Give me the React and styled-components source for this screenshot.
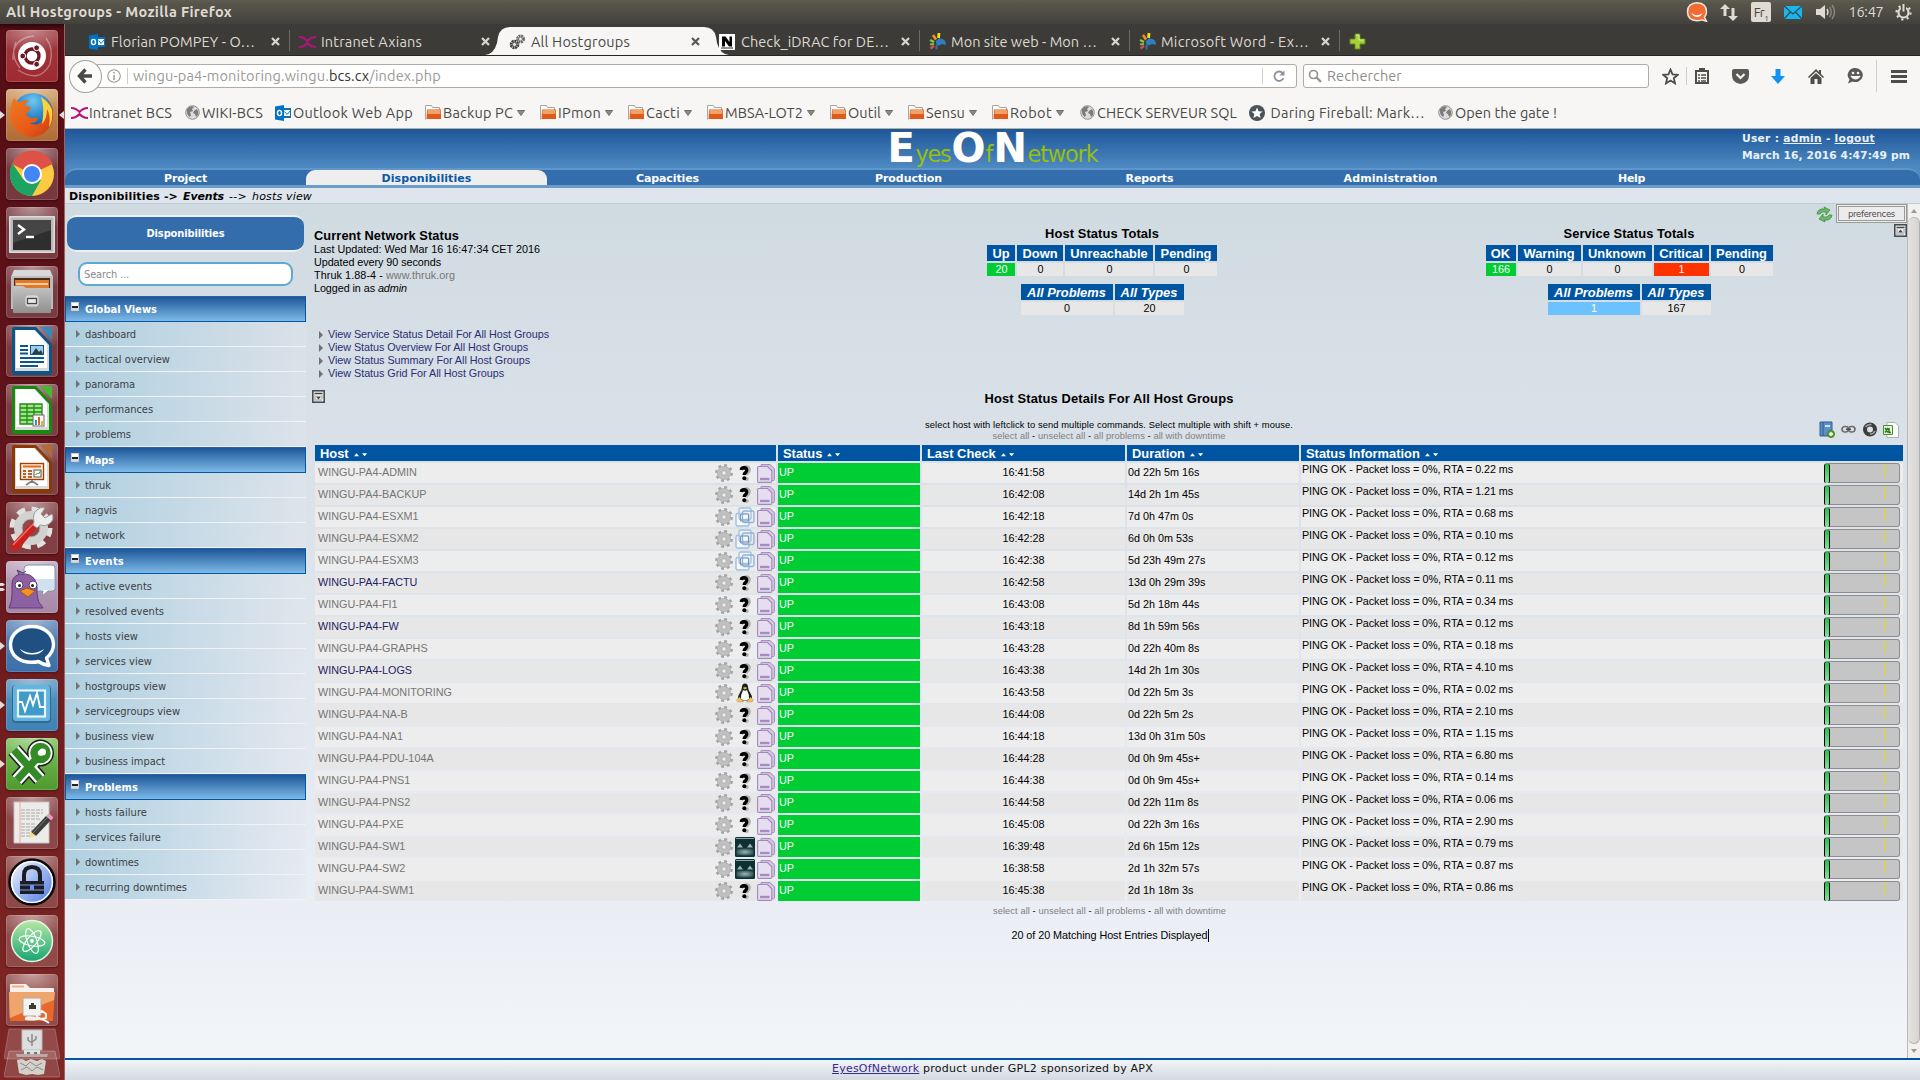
import React, { useLayoutEffect, useRef, useState } from "react";
import styled, { createGlobalStyle, css } from "styled-components";

const UI = `"Ubuntu", "Open Sans", "Noto Sans", sans-serif`;
const ARIAL = `"Liberation Sans", Arial, sans-serif`;
const VERDANA = `"DejaVu Sans", Verdana, sans-serif`;
const CONDENSED = `"DejaVu Sans Condensed", "DejaVu Sans", Tahoma, sans-serif`;

const Global = createGlobalStyle`
  *, *::before, *::after { box-sizing: border-box; }
  html, body { margin: 0; padding: 0; }
  body { width: 1920px; height: 1080px; overflow: hidden; font-family: ${ARIAL}; }
  svg { display: block; flex: none; }
`;

/* ---------- text that keeps a given advance width ---------- */
const FitSpan = styled.span`
  display: inline-block;
  white-space: pre;
  flex: none;
`;
function Fit({ w, children }) {
  const ref = useRef(null);
  const [ls, setLs] = useState(0);
  useLayoutEffect(() => {
    const el = ref.current;
    el.style.letterSpacing = "0px";
    const natural = el.getBoundingClientRect().width;
    const n = el.textContent.length;
    setLs((w - natural) / n);
    el.style.letterSpacing = `${(w - natural) / n}px`;
  }, [w]);
  return (
    <FitSpan ref={ref} style={{ letterSpacing: `${ls}px` }}>
      {children}
    </FitSpan>
  );
}

/* ---------- desktop ---------- */
const Desktop = styled.div`
  width: 1920px;
  height: 1080px;
  display: flex;
  flex-direction: column;
  overflow: hidden;
  background: #eef1f6;
`;
const TopPanel = styled.header`
  height: 24px;
  flex: none;
  display: flex;
  align-items: center;
  justify-content: space-between;
  padding: 0 4px 0 6px;
  background: linear-gradient(#5f5c50 0, #57554b 4px, #43413c 100%);
  color: #dfdbd2;
  font: 14.5px/24px ${UI};
`;
const WindowTitle = styled.div`
  font-weight: 700;
`;
const Tray = styled.div`
  display: flex;
  align-items: center;
  height: 24px;
`;
const TrayItem = styled.div`
  width: ${(p) => p.$w}px;
  display: flex;
  justify-content: center;
  align-items: center;
`;
const KeyboardBadge = styled.div`
  width: 20px;
  height: 20px;
  border-radius: 2px;
  background: #dfdbd2;
  color: #45433d;
  font: 13px/20px ${UI};
  letter-spacing: -0.5px;
  text-align: center;
  sub {
    font-size: 8px;
    line-height: 0;
  }
`;
const Workspace = styled.div`
  flex: 1;
  display: flex;
  min-height: 0;
`;

/* ---------- launcher ---------- */
const LauncherBar = styled.nav`
  width: 65px;
  flex: none;
  padding: 6px 0 0;
  display: flex;
  flex-direction: column;
  gap: 7px;
  overflow: hidden;
  border-right: 1px solid #a0605c;
  background: linear-gradient(#2c070b 0, #560d14 6px, #5f131a 35%, #6f1c1f 60%, #7e2725 100%);
`;
const LauncherSlot = styled.div`
  height: 52px;
  flex: none;
  display: flex;
  align-items: center;
`;
const Pip = styled.div`
  width: 6px;
  display: flex;
  align-items: center;
`;
const Tile = styled.div`
  width: 52px;
  height: 52px;
  border-radius: 4px;
  background: ${(p) =>
    p.$bg
      ? `radial-gradient(ellipse 80% 45% at 50% 0, rgba(255,255,255,.4), rgba(255,255,255,0)), ${p.$bg}`
      : "radial-gradient(ellipse 75% 50% at 50% 0, rgba(255,255,255,.5), rgba(255,255,255,.05)), rgba(255,255,255,.13)"};
  box-shadow: inset 0 0 0 1px rgba(255, 255, 255, 0.16), 0 1px 2px rgba(0, 0, 0, 0.35);
`;
const FoldedTiles = styled.div`
  margin-top: -5px;
  padding-left: 4px;
`;

const LibreDoc = ({ dark, mid, children }) => (
  <svg width="52" height="52" viewBox="0 0 52 52">
    <path d="M8 2h22l16 17v28q0 3-3 3H9q-3 0-3-3V4q0-2 2-2z" fill={dark} />
    <path d="M34 2h12v13z" fill={mid} />
    <path d="M9 5h20l14 15v26H9z" fill="#d9d9d9" />
    <path d="M10 5h18l13 14v24H10z" fill="#fff" />
    {children}
  </svg>
);

const launcherItems = [
  {
    id: "dash",
    bg: "linear-gradient(#9c3a40,#a02a32)",
    icon: (
      <svg width="52" height="52" viewBox="0 0 52 52">
        <path d="M7 30Q6 8 28 6M12 40Q34 54 44 34M40 8q8 10 4 26M10 12Q4 26 14 38" stroke="#fff" strokeOpacity=".35" strokeWidth="1.4" fill="none" />
        <circle cx="26" cy="26" r="14" fill="#fff" />
        <circle cx="26" cy="26" r="7" fill="none" stroke="#6c1a24" strokeWidth="3.4" />
        <g fill="#6c1a24" stroke="#fff" strokeWidth="1">
          <circle cx="16.7" cy="26" r="2.9" />
          <circle cx="30.6" cy="17.8" r="2.9" />
          <circle cx="30.6" cy="34.2" r="2.9" />
        </g>
      </svg>
    ),
  },
  {
    id: "firefox",
    bg: "linear-gradient(#cf9a66,#b06a35)",
    left: "arrow",
    right: true,
    icon: (
      <svg width="52" height="52" viewBox="0 0 52 52">
        <defs>
          <radialGradient id="ffb" cx=".5" cy=".2" r=".8"><stop offset="0" stopColor="#6fc8f0" /><stop offset=".6" stopColor="#1f7ac0" /><stop offset="1" stopColor="#123f7c" /></radialGradient>
          <linearGradient id="ffo" x1="0" y1="0" x2="1" y2="1"><stop offset="0" stopColor="#ee7a1f" /><stop offset=".6" stopColor="#e85a18" /><stop offset="1" stopColor="#c93713" /></linearGradient>
        </defs>
        <circle cx="27" cy="24" r="20" fill="url(#ffb)" />
        <path d="M5 17q1-4 3-8 2 3 6 4 5-3 9-1-4 2-4 5 3 0 6 1-1 4-5 6 1 5 7 5 4-1 5 1-2 4-8 4 5 3 10 0 6-4 7-11 1-9-4-13 8 3 10 13 1 14-9 21-11 7-22 1Q3 38 4 25q0-4 1-8z" fill="url(#ffo)" />
        <path d="M35 8q8 5 11 13 1 11-3 17 2-12-2-18 0 10-5 15 3-16-1-27z" fill="#fbd33c" />
      </svg>
    ),
  },
  {
    id: "chrome",
    icon: (
      <svg width="52" height="52" viewBox="0 0 52 52">
        <circle cx="26" cy="26" r="22" fill="#fccb41" />
        <path d="M26 26 6 16A22 22 0 0 1 46.5 16z" fill="#dd5147" />
        <path d="M26 4a22 22 0 0 1 20.5 12H26z" fill="#dd5147" />
        <path d="M6.5 15.500A22 22 0 0 0 26 48l9-16-18-1z" fill="#1da362" />
        <circle cx="26" cy="26" r="10" fill="#fff" />
        <circle cx="26" cy="26" r="8" fill="#4285f4" />
      </svg>
    ),
  },
  {
    id: "terminal",
    icon: (
      <svg width="52" height="52" viewBox="0 0 52 52">
        <rect x="3" y="9" width="46" height="37" rx="1" fill="#dcdcdc" />
        <rect x="4.500" y="10.500" width="43" height="34" fill="#b9b9b9" />
        <rect x="7" y="13" width="38" height="30" fill="#2e2e2e" />
        <path d="M7 13h38v10L7 36z" fill="#454545" />
        <path d="m12 18 6 4.500-6 4.500" stroke="#fff" strokeWidth="2.400" fill="none" />
        <path d="M20 30h8" stroke="#fff" strokeWidth="2.400" />
      </svg>
    ),
  },
  {
    id: "files",
    icon: (
      <svg width="52" height="52" viewBox="0 0 52 52">
        <defs><linearGradient id="cab" x1="0" y1="0" x2="0" y2="1"><stop offset="0" stopColor="#c4c4c4" /><stop offset="1" stopColor="#8f8f8f" /></linearGradient></defs>
        <path d="M8 4h36l3 7v32H5V11z" fill="#d9d9d9" />
        <path d="M5 10h42v33H5z" fill="#bdbdbd" />
        <path d="M8 12h36v11H8z" fill="#4a2c18" />
        <path d="M9 14h34v8H9z" fill="#e0792c" />
        <path d="M10 17h32v2H10z" fill="#f8cf9c" />
        <path d="M7 20h10l3 2h25v24q0 1-1 1H8q-1 0-1-1z" fill="url(#cab)" />
        <rect x="20" y="30" width="12" height="10" rx="2" fill="#c9c9c9" stroke="#e2e2e2" />
        <rect x="21.500" y="32.500" width="9" height="5" fill="#e8e8e8" stroke="#444" strokeWidth="1.200" />
      </svg>
    ),
  },
  {
    id: "writer",
    icon: (
      <LibreDoc dark="#0c5687" mid="#3a87b8">
        <path d="M14 21h8M14 25h8M14 28.500h8M14 33h24M14 37h24M14 41h18" stroke="#0b5788" strokeWidth="2" />
        <rect x="24.500" y="20.500" width="13" height="9" fill="#9fcdf0" stroke="#0b5788" />
        <path d="m26 29 4-6 3 4 2-2 2 4z" fill="#2c3d3d" />
      </LibreDoc>
    ),
  },
  {
    id: "calc",
    icon: (
      <LibreDoc dark="#168a0c" mid="#49b535">
        <rect x="14" y="20" width="22" height="20" fill="#a3e687" />
        <path d="M14 20h22v20H14zM14 24h22M14 28h22M14 32h22M14 36h22M21 20v20M28 20v20" stroke="#1f8a17" strokeWidth="1.300" fill="none" />
        <rect x="27" y="31" width="11" height="11" fill="#fff" stroke="#666" />
        <path d="M29 36h2v5h-2z" fill="#1b9ae0" /><path d="M32 33h2v8h-2z" fill="#e0601b" /><path d="M35 37h2v4h-2z" fill="#e8b51b" />
      </LibreDoc>
    ),
  },
  {
    id: "impress",
    icon: (
      <LibreDoc dark="#8a3a06" mid="#b06a34">
        <rect x="14.500" y="20.500" width="23" height="16" fill="#fdeee2" stroke="#a33e03" strokeWidth="1.400" />
        <path d="M17 23.500h18" stroke="#dd6a1b" strokeWidth="2" />
        <path d="M17 28h3M17 31h3M17 34h3M22 28h4M22 31h4M22 34h4" stroke="#8a3a06" strokeWidth="1.600" />
        <rect x="28" y="27" width="7" height="7" fill="#fff" stroke="#555" />
        <path d="m29.500 32 2-2 1 1 2-3" stroke="#2b9a22" fill="none" />
        <path d="m20 42 6-4 6 4M26 37v2" stroke="#7d7d7d" strokeWidth="1.600" fill="none" />
      </LibreDoc>
    ),
  },
  {
    id: "settings",
    icon: (
      <svg width="52" height="52" viewBox="0 0 52 52">
        <circle cx="25" cy="26" r="18" fill="none" stroke="#e0e0de" strokeWidth="7" strokeDasharray="8 6.137" />
        <circle cx="25" cy="26" r="13" fill="none" stroke="#d2d2d0" strokeWidth="8" />
        <circle cx="25" cy="26" r="9" fill="#8d4a4b" stroke="#b7b7b5" />
        <path d="M5 43 28 18l5 5L12 48q-5 2-7-1z" fill="#c9211e" />
        <path d="m7 43 22-23" stroke="#f0706a" strokeWidth="1.500" />
        <path d="M28 20q-2-8 3-12 4-4 8-2l-4 6 4 4 7-4q3 6-3 10-4 3-9 1l-3 3-4-3z" fill="#ececec" stroke="#9b9b9b" />
      </svg>
    ),
  },
  {
    id: "pidgin",
    bg: "linear-gradient(#bba3bd,#a788a6)",
    left: "double",
    icon: (
      <svg width="52" height="52" viewBox="0 0 52 52">
        <path d="M22 4h24q3 0 3 3v20q0 3-3 3h-4l-6 5 1-5H24q-6 0-6-6V8q0-4 4-4z" fill="#fff" stroke="#7b93ad" />
        <path d="M24 18h24v9q0 2-2 2H24z" fill="#cfe0ee" />
        <path d="M3 47q3-6 3-14V22q1-8 9-9 10-1 14 6 3 6 2 14 0 8 6 14z" fill="#8d5fa3" stroke="#5d3a75" />
        <path d="m13 13-2-4 6 3 3-2" stroke="#5d3a75" fill="#8d5fa3" />
        <circle cx="13" cy="24" r="4" fill="#fff" stroke="#5d3a75" /><circle cx="27" cy="24" r="4" fill="#fff" stroke="#5d3a75" />
        <circle cx="13.500" cy="24.500" r="1.500" fill="#222" /><circle cx="26.500" cy="24.500" r="1.500" fill="#222" />
        <path d="m14 30 7-3 8 3-7 6z" fill="#f6921e" stroke="#9c5304" strokeWidth=".8" />
      </svg>
    ),
  },
  {
    id: "hipchat",
    bg: "linear-gradient(#5f86b5,#3b6ea8)",
    left: "arrow",
    icon: (
      <svg width="52" height="52" viewBox="0 0 52 52">
        <path d="M26 6.500c12 0 21.500 7.500 21.500 18 0 6-3 10-7 13.500l2.500 7.500q-6-.8-10.500-4-3 .8-6.500.8C13 42.300 4.500 35 4.500 24.500S14 6.500 26 6.500z" fill="#205081" stroke="#fff" strokeWidth="3.400" strokeLinejoin="round" />
        <path d="M14 29q12 8 24 0-3 5.500-12 5.500T14 29z" fill="#fff" />
      </svg>
    ),
  },
  {
    id: "monitor",
    bg: "linear-gradient(#5c94bf,#3f82b4)",
    left: "arrow",
    icon: (
      <svg width="52" height="52" viewBox="0 0 52 52">
        <rect x="6" y="6" width="39" height="38" rx="4" fill="#2f6b94" />
        <rect x="7" y="6" width="37" height="36" rx="3" fill="#63b5dd" />
        <rect x="12" y="11.500" width="27" height="26" fill="#3f9bc9" stroke="#e6f4fb" strokeWidth="2.200" />
        <path d="M12 23h4l3 9 5-15 3 9 4-12 3 14h5" stroke="#fff" strokeWidth="1.900" fill="none" />
      </svg>
    ),
  },
  {
    id: "keepassx",
    bg: "linear-gradient(#7cc15c,#4f9a2f)",
    left: "arrow",
    icon: (
      <svg width="52" height="52" viewBox="0 0 52 52">
        <g stroke="#1d1d1d" strokeWidth="15" fill="none"><path d="m8 12 26 29" /><path d="M11 42 32 19" /><circle cx="34.500" cy="15" r="6" /></g>
        <g stroke="#fff" strokeWidth="12" fill="none"><path d="m8 12 26 29" /><path d="M11 42 32 19" /><circle cx="34.500" cy="15" r="6" /></g>
        <g stroke="#348a26" strokeWidth="7.500" fill="none"><path d="m8 12 26 29" /><path d="M11 42 32 19" /><circle cx="34.500" cy="15" r="6.500" /></g>
        <circle cx="36.500" cy="14" r="3.500" fill="#fff" />
      </svg>
    ),
  },
  {
    id: "gedit",
    icon: (
      <svg width="52" height="52" viewBox="0 0 52 52">
        <path d="M8 5h35v41H8z" fill="#ececea" stroke="#c2c2c2" />
        <path d="M14 5v41" stroke="#efa5a5" /><path d="M15 13h22M15 16h22M15 19h18M15 22h20M15 27h15M15 30h17M15 33h20M15 36h17M15 39h9" stroke="#a9a9a9" strokeDasharray="4 1" />
        <path d="m40 19 5 4-15 16-5-4z" fill="#3e3e3e" /><path d="m41.500 20.500-15 16" stroke="#777" /><path d="m25 35 5 4-7 2z" fill="#f3e27a" /><path d="m40 19 3-2.500 4.500 4-2.500 3z" fill="#e79ac2" />
      </svg>
    ),
  },
  {
    id: "keepass",
    icon: (
      <svg width="52" height="52" viewBox="0 0 52 52">
        <defs><linearGradient id="kp" x1="0" y1="0" x2="1" y2="1"><stop offset="0" stopColor="#fff" /><stop offset=".5" stopColor="#9db8f0" /><stop offset="1" stopColor="#4a6fe0" /></linearGradient></defs>
        <circle cx="26" cy="26" r="22.500" fill="url(#kp)" stroke="#0c0c0c" strokeWidth="2.600" />
        <circle cx="26" cy="26" r="20.400" fill="none" stroke="#fff" strokeWidth="1.400" />
        <path d="M18 26v-7q0-8 8-8t8 8v7" fill="none" stroke="#1c1c24" strokeWidth="4" />
        <path d="M14 25h24v13H14z" fill="#1c1c24" />
        <path d="M14 29h24M14 34h24" stroke="#7f9ae8" strokeWidth="1.200" /><path d="M24 29h4v5h-4z" fill="#6f8fe8" />
      </svg>
    ),
  },
  {
    id: "atom",
    icon: (
      <svg width="52" height="52" viewBox="0 0 52 52">
        <defs><linearGradient id="at" x1="0" y1="0" x2="0" y2="1"><stop offset="0" stopColor="#b7e8a4" /><stop offset="1" stopColor="#17a673" /></linearGradient></defs>
        <circle cx="26" cy="26" r="20.500" fill="url(#at)" stroke="#e6f6e8" strokeWidth="1.500" />
        <g fill="none" stroke="#fff" strokeWidth="1.200">
          <ellipse cx="26" cy="26" rx="13" ry="4.800" transform="rotate(10 26 26)" />
          <ellipse cx="26" cy="26" rx="13" ry="4.800" transform="rotate(70 26 26)" />
          <ellipse cx="26" cy="26" rx="13" ry="4.800" transform="rotate(130 26 26)" />
        </g>
        <circle cx="26" cy="26" r="1.900" fill="#fff" />
      </svg>
    ),
  },
  {
    id: "network-folder",
    icon: (
      <svg width="52" height="52" viewBox="0 0 52 52">
        <path d="M4 11q0-1 1-1h15l4 4h23q1 0 1 1v7H4z" fill="#f4f1ee" />
        <path d="M6 12.500h12" stroke="#f3a878" strokeWidth="1.800" />
        <path d="M3 18h46l-2 28q0 1-1 1H5q-1 0-1-1z" fill="#e8672a" /><path d="M3 18h46l-1 8L3.700 44z" fill="#efa66c" />
        <rect x="17" y="24" width="18" height="18" rx="1.500" fill="#f3f3f1" stroke="#b2a79e" />
        <path d="M23 35v-4h2v-2h3v2h2v4z" fill="#3b3b34" />
        <path d="m31 40 5-3 4 3v4l-5 1-4-2zM31 44q-12-2-11 1 6 1 11 0t12 4" fill="none" stroke="#f2f2f2" strokeWidth="2" />
      </svg>
    ),
  },
];

function Launcher() {
  return (
    <LauncherBar>
      {launcherItems.map((it) => (
        <LauncherSlot key={it.id}>
          <Pip>
            {it.left === "arrow" && (
              <svg width="5" height="8"><path d="M0 0 5 4 0 8z" fill="#e0dcdc" /></svg>
            )}
            {it.left === "double" && (
              <svg width="5" height="8"><path d="M0 0h3l2 1.500-2 1.500H0zM0 5h3l2 1.500L3 8H0z" fill="#e0dcdc" /></svg>
            )}
          </Pip>
          <Tile $bg={it.bg}>{it.icon}</Tile>
          {it.right && (
            <svg width="6" height="8"><path d="M6 0v8L1 4z" fill="#e0dcdc" /></svg>
          )}
        </LauncherSlot>
      ))}
      <FoldedTiles>
        <svg width="56" height="50" viewBox="0 0 56 50">
          <path d="M5 1h46l5 29q0 1-2 1H2q-2 0-2-1z" fill="#fff" fillOpacity=".17" stroke="#fff" strokeOpacity=".2" />
          <path d="M18 2h20v20H18z" fill="#dedede" stroke="#b9b9b9" />
          <path d="M28 6v12M24 9v3l4 3M32 8v3l-4 3" stroke="#8b8b8b" strokeWidth="1.500" fill="none" />
          <path d="M20 22h16v5H20z" fill="#d9d9d9" /><path d="M23 24h3v2h-3zM30 24h3v2h-3z" fill="#5a5a5a" />
          <path d="M5 23h46l5 25q0 1-2 1H2q-2 0-2-1z" fill="#fff" fillOpacity=".15" stroke="#fff" strokeOpacity=".25" />
          <path d="M12 26h32l-1 3H13z" fill="#b9aaa6" />
          <path d="m13 32 5-1 4 2 5-2 6 2 5-2 4 2-2 13-6 1-6-1-6 1-7-2z" fill="#d4d0cc" />
          <path d="m16 35 6 3 4-4 6 4 6-3M17 42l6-3 5 4 5-4 6 3" stroke="#8f8a88" fill="none" />
        </svg>
      </FoldedTiles>
    </LauncherBar>
  );
}

/* ---------- browser chrome ---------- */
const Browser = styled.div`
  flex: 1;
  min-width: 0;
  display: flex;
  flex-direction: column;
`;
const TabStrip = styled.div`
  height: 32px;
  flex: none;
  display: flex;
  align-items: flex-end;
  padding-left: 15px;
  background: #3c3b37;
  border-bottom: 1px solid #262522;
`;
const TabBox = styled.div`
  position: relative;
  width: 210px;
  height: 28px;
  display: flex;
  align-items: center;
  padding: 1px 7px 0 9px;
  gap: 6px;
  font: 14.500px/27px ${UI};
  color: ${(p) => (p.$active ? "#4a4a46" : "#dcd9d0")};
  ${(p) =>
    p.$divider &&
    css`
      &::after {
        content: "";
        position: absolute;
        right: 0;
        top: 3px;
        width: 1px;
        height: 21px;
        background: #6c6a64;
      }
    `}
`;
const TabShape = styled.svg`
  position: absolute;
  left: -15px;
  top: 0;
`;
const TabLabel = styled.div`
  flex: 1;
  position: relative;
`;
const IconHolder = styled.div`
  position: relative;
  width: 16px;
  height: 16px;
  display: flex;
  align-items: center;
  justify-content: center;
`;
const NavBar = styled.div`
  height: 40px;
  flex: none;
  display: flex;
  align-items: center;
  padding-left: 4px;
  background: #f7f6f5;
`;
const BackButton = styled.div`
  width: 33px;
  height: 33px;
  border-radius: 50%;
  border: 1px solid #a3a19c;
  background: #fbfbfa;
  display: flex;
  align-items: center;
  justify-content: center;
  z-index: 1;
`;
const UrlField = styled.div`
  width: 1204px;
  height: 24px;
  margin-left: -5px;
  padding-left: 9px;
  border: 1px solid #aeaca7;
  border-radius: 0 3px 3px 0;
  background: #fff;
  display: flex;
  align-items: center;
  font: 14.500px/24px ${UI};
  color: #9a9996;
  b {
    font-weight: 400;
    color: #33332f;
  }
`;
const Rule = styled.div`
  width: 1px;
  height: ${(p) => p.$h}px;
  background: #cfcdc9;
  margin: 0 ${(p) => p.$r || 0}px 0 ${(p) => p.$l || 0}px;
`;
const UrlText = styled.div`
  flex: 1;
`;
const ReloadSlot = styled.div`
  width: 33px;
  display: flex;
  justify-content: center;
`;
const SearchField = styled.div`
  width: 347px;
  height: 24px;
  margin-left: 6px;
  padding-left: 4px;
  gap: 5px;
  border: 1px solid #aeaca7;
  border-radius: 3px;
  background: #fff;
  display: flex;
  align-items: center;
  font: 14.500px/24px ${UI};
  color: #8f8e8b;
`;
const ToolButton = styled.div`
  width: ${(p) => p.$w}px;
  display: flex;
  justify-content: center;
`;
const BookmarkBar = styled.div`
  height: 33px;
  flex: none;
  display: flex;
  align-items: center;
  gap: 12px;
  padding: 1px 0 0 6px;
  background: #f7f6f5;
  border-bottom: 1px solid #b5b0a6;
  font: 14.500px/24px ${UI};
  color: #4a4945;
`;
const Bookmark = styled.div`
  display: flex;
  align-items: center;
  gap: 2px;
  margin-right: ${(p) => (p.$menu ? 3 : 0)}px;
`;
const BookmarkArrow = styled.div`
  margin-left: 2px;
`;

const OutlookIcon = () => (
  <svg width="16" height="16" viewBox="0 0 16 16">
    <path d="M8 3h8v10H8z" fill="#0072c6" />
    <path d="M9 5h6v6H9z" fill="#fff" /><path d="m9.500 6.500 2.500 3 3.500-4" stroke="#0072c6" fill="none" />
    <path d="M0 1.500 9 0v16l-9-1.500z" fill="#0072c6" />
    <ellipse cx="4.500" cy="8" rx="2" ry="2.600" fill="none" stroke="#fff" strokeWidth="1.400" />
  </svg>
);
const AxiansIcon = () => (
  <svg width="17" height="12" viewBox="0 0 17 12">
    <path d="M0 1q5 0 8.500 4Q12 1 17 1M0 11q5 0 8.500-4 3.500 4 8.500 4" stroke="#b5127b" strokeWidth="1.900" fill="none" />
  </svg>
);
const GearsIcon = () => (
  <svg width="17" height="16" viewBox="0 0 17 16">
    <circle cx="5.500" cy="10.500" r="3.300" fill="#e8e8e8" stroke="#3f3f3f" strokeWidth="3" strokeDasharray="1.900 .6" />
    <circle cx="5.500" cy="10.500" r="2" fill="#e4e4e4" stroke="#555" strokeWidth=".8" />
    <circle cx="11.500" cy="5" r="3" fill="#ededed" stroke="#6a6a6a" strokeWidth="3" strokeDasharray="1.800 .6" />
    <circle cx="11.500" cy="5" r="1.800" fill="#f2f2f2" stroke="#777" strokeWidth=".8" />
  </svg>
);
const NagiosIcon = () => (
  <svg width="16" height="16" viewBox="0 0 16 16">
    <path d="M0 0h16v16H0z" fill="#fff" /><path d="M3 2.500h3.500l4 5.500V2.500H13v10H10L6 7v5.500H3z" fill="#000" /><path d="M2 14h12" stroke="#222" />
  </svg>
);
const JoomlaIcon = () => (
  <svg width="17" height="17" viewBox="0 0 17 17">
    <path d="M7 10q-1-3 4-4.500 6 0 6 6.500l-4-1-3 1.500-2-.5z" fill="#2f7fc0" />
    <path d="m1 7 4 2" stroke="#8cc63f" strokeWidth="2.400" /><path d="m4 2 3 4.500" stroke="#f3921d" strokeWidth="2.600" /><path d="m10 0-.5 5" stroke="#f3e01d" strokeWidth="2.800" />
    <path d="m1 11.500 4-.5" stroke="#7dc243" strokeWidth="2" /><path d="m1.500 15.500 3.500-2.500" stroke="#e0455a" strokeWidth="2.400" /><path d="m7.500 12 0 4.500" stroke="#2f71b8" strokeWidth="2" />
  </svg>
);
const GlobeIcon = () => (
  <svg width="15" height="15" viewBox="0 0 15 15">
    <circle cx="7.500" cy="7.500" r="6.800" fill="#dcdcdc" stroke="#8f8f8f" />
    <path d="M2 4q4-4 7-2l-2 2 1 2-3 1 1 3-1 2Q1 9 2 4zM9 6l3-2q2 3 1 6l-2 2-1-3-2-1z" fill="#7b7b7b" />
  </svg>
);
const FolderIcon = () => (
  <svg width="16" height="15" viewBox="0 0 16 15">
    <path d="M.5 14.500v-14h6l1 2h7v3" fill="#fff" stroke="#a9a6a0" />
    <path d="M2 4.500h14V14H1.500z" fill="#e05a1c" /><path d="M2.500 5h13v4h-13z" fill="#f0a269" />
  </svg>
);
const StarDisc = () => (
  <svg width="16" height="16" viewBox="0 0 16 16">
    <circle cx="8" cy="8" r="8" fill="#4a525a" /><path d="m8 2.500 1.600 3.700 4 .3-3 2.600 1 3.900L8 10.900 4.400 13l1-3.900-3-2.600 4-.3z" fill="#fff" />
  </svg>
);
const CloseX = ({ c }) => (
  <svg width="9" height="9" viewBox="0 0 9 9"><path d="m1 1 7 7M8 1 1 8" stroke={c} strokeWidth="2.300" /></svg>
);
const PlusIcon = () => (
  <svg width="17" height="17" viewBox="0 0 17 17"><path d="M6 1h5v5h5v5h-5v5H6v-5H1V6h5z" fill="#a8cf38" stroke="#5f8a1d" /><path d="M7 2h3v5h5" stroke="#d8ee9a" fill="none" /></svg>
);

const tabs = [
  { icon: <OutlookIcon />, label: "Florian POMPEY - O…", w: 144, divider: true },
  { icon: <AxiansIcon />, label: "Intranet Axians", w: 101 },
  { icon: <GearsIcon />, label: "All Hostgroups", w: 99, active: true },
  { icon: <NagiosIcon />, label: "Check_iDRAC for DE…", w: 148, divider: true },
  { icon: <JoomlaIcon />, label: "Mon site web - Mon …", w: 146, divider: true },
  { icon: <JoomlaIcon />, label: "Microsoft Word - Ex…", w: 148, divider: true },
];
const bookmarks = [
  { icon: <AxiansIcon />, label: "Intranet BCS", w: 83 },
  { icon: <GlobeIcon />, label: "WIKI-BCS", w: 61 },
  { icon: <OutlookIcon />, label: "Outlook Web App", w: 120 },
  { icon: <FolderIcon />, label: "Backup PC", w: 70, menu: true },
  { icon: <FolderIcon />, label: "IPmon", w: 43, menu: true },
  { icon: <FolderIcon />, label: "Cacti", w: 34, menu: true },
  { icon: <FolderIcon />, label: "MBSA-LOT2", w: 78, menu: true },
  { icon: <FolderIcon />, label: "Outil", w: 33, menu: true },
  { icon: <FolderIcon />, label: "Sensu", w: 39, menu: true },
  { icon: <FolderIcon />, label: "Robot", w: 42, menu: true },
  { icon: <GlobeIcon />, label: "CHECK SERVEUR SQL", w: 140 },
  { icon: <StarDisc />, label: " Daring Fireball: Mark…", w: 158 },
  { icon: <GlobeIcon />, label: "Open the gate !", w: 102 },
];

function BrowserChrome() {
  return (
    <>
      <TabStrip>
        {tabs.map((t) => (
          <TabBox key={t.label} $active={t.active} $divider={t.divider}>
            {t.active && (
              <TabShape width="244" height="28" viewBox="0 0 244 28">
                <path d="M0 28q9-1 12-12l1-6Q15 0 25 0h194q10 0 12 10l1 6q3 11 12 12z" fill="#f7f6f5" />
              </TabShape>
            )}
            <IconHolder>{t.icon}</IconHolder>
            <TabLabel><Fit w={t.w}>{t.label}</Fit></TabLabel>
            <IconHolder><CloseX c={t.active ? "#5a5955" : "#d8d5cc"} /></IconHolder>
          </TabBox>
        ))}
        <TabBox><IconHolder><PlusIcon /></IconHolder></TabBox>
      </TabStrip>
      <NavBar>
        <BackButton>
          <svg width="16" height="16" viewBox="0 0 16 16"><path d="M8.500 1.500 2.500 8l6 6.500M3 8h12" stroke="#4a4945" strokeWidth="3.400" fill="none" /></svg>
        </BackButton>
        <UrlField>
          <svg width="14" height="14" viewBox="0 0 14 14"><circle cx="7" cy="7" r="6.300" fill="none" stroke="#9a9996" strokeWidth="1.100" /><path d="M7 3v1.600M7 6v5" stroke="#9a9996" strokeWidth="1.500" /></svg>
          <Rule $h={16} $l={6} $r={5} />
          <UrlText><Fit w={308}>wingu-pa4-monitoring.wingu.<b>bcs.cx</b>/index.php</Fit></UrlText>
          <Rule $h={16} />
          <ReloadSlot>
            <svg width="12" height="12" viewBox="0 0 12 12"><path d="M10 3.500A4.700 4.700 0 1 0 10.500 8" stroke="#8b929b" strokeWidth="1.800" fill="none" /><path d="M11.500.5v5h-5z" fill="#8b929b" /></svg>
          </ReloadSlot>
        </UrlField>
        <SearchField>
          <svg width="14" height="14" viewBox="0 0 14 14"><circle cx="5.500" cy="5.500" r="4" fill="none" stroke="#95948f" strokeWidth="1.700" /><path d="m8.500 8.500 4.500 4.500" stroke="#95948f" strokeWidth="2.400" /></svg>
          <Fit w={75}>Rechercher</Fit>
        </SearchField>
        <ToolButton $w={43}>
          <svg width="17" height="17" viewBox="0 0 17 17"><path d="m8.500 1.500 2 4.900 5.300.4-4 3.400 1.200 5.200-4.500-2.800L4 15.400l1.200-5.200-4-3.400 5.300-.4z" fill="none" stroke="#4e4d49" strokeWidth="1.800" /></svg>
        </ToolButton>
        <Rule $h={18} $l={-6} $r={5} />
        <ToolButton $w={21}>
          <svg width="14" height="16" viewBox="0 0 14 16"><path d="M1 3h12v12H1z" fill="none" stroke="#4e4d49" strokeWidth="2" /><path d="M4 0h6v4H4z" fill="#4e4d49" /><path d="M3 7h2M6 7h5M3 10h2M6 10h5M3 13h2M6 13h5" stroke="#4e4d49" strokeWidth="1.500" /></svg>
        </ToolButton>
        <ToolButton $w={56}>
          <svg width="17" height="15" viewBox="0 0 17 15"><path d="M2 0h13q2 0 2 2v4q0 8-8.500 9Q0 14 0 6V2q0-2 2-2z" fill="#5a5955" /><path d="m4.500 5 4 4 4-4" stroke="#f7f6f5" strokeWidth="2.200" fill="none" /></svg>
        </ToolButton>
        <ToolButton $w={20}>
          <svg width="14" height="15" viewBox="0 0 14 15"><path d="M4.500 0h5v7H14l-7 8-7-8h4.500z" fill="#1191f3" /></svg>
        </ToolButton>
        <ToolButton $w={56}>
          <svg width="16" height="15" viewBox="0 0 16 15"><path d="M8 0 0 8l1 1 7-6.500L15 9l1-1-3-3V1h-2v2z" fill="#4e4d49" /><path d="m8 4-5.500 5v6h4v-5h3v5h4V9z" fill="#4e4d49" /></svg>
        </ToolButton>
        <ToolButton $w={22}>
          <svg width="17" height="16" viewBox="0 0 17 16"><path d="M8.500 0a7.500 7 0 1 1-3 13.500L1 15.500l1.500-4A7.500 7 0 0 1 8.500 0z" fill="#5a5955" /><circle cx="6" cy="5" r="1.300" fill="#f7f6f5" /><circle cx="11" cy="5" r="1.300" fill="#f7f6f5" /><path d="M4 8q4.500 5.500 9 0" stroke="#f7f6f5" strokeWidth="1.600" fill="#f7f6f5" /></svg>
        </ToolButton>
        <Rule $h={32} $l={10} />
        <ToolButton $w={43}>
          <svg width="16" height="13" viewBox="0 0 16 13"><path d="M0 1.500h16M0 6.500h16M0 11.500h16" stroke="#4e4d49" strokeWidth="2.800" /></svg>
        </ToolButton>
      </NavBar>
      <BookmarkBar>
        {bookmarks.map((b) => (
          <Bookmark key={b.label} $menu={b.menu}>
            <IconHolder>{b.icon}</IconHolder>
            <Fit w={b.w}>{b.label}</Fit>
            {b.menu && (
              <BookmarkArrow>
                <svg width="8" height="6"><path d="M.5.5h7L4 5.500z" fill="#8d8b86" stroke="#6f6d68" /></svg>
              </BookmarkArrow>
            )}
          </Bookmark>
        ))}
      </BookmarkBar>
    </>
  );
}

/* ---------- EyesOfNetwork page ---------- */
const PageHeader = styled.div`
  height: 39px;
  flex: none;
  display: grid;
  grid-template-columns: 1fr auto 1fr;
  background: linear-gradient(#1e5799, #4e8ac2);
`;
const Logo = styled.div`
  grid-column: 2;
  height: 39px;
  display: flex;
  align-items: baseline;
  gap: 1px;
  font-family: ${VERDANA};
`;
const LogoBig = styled.span`
  font-size: 40px;
  line-height: 39px;
  font-weight: 700;
  color: #fff;
  text-shadow: 0 0 1px #777;
`;
const LogoSmall = styled.span`
  font-size: 22.500px;
  line-height: 34px;
  color: #97bf0d;
`;
const UserInfo = styled.div`
  justify-self: end;
  width: 178px;
  padding-top: 1px;
  font: bold 10.700px/17px ${VERDANA};
  color: #eaf1f8;
  u {
    text-decoration-thickness: 1px;
  }
`;
const MenuWrap = styled.div`
  flex: none;
  background: #4e8ac2;
`;
const MenuBar = styled.div`
  height: 20px;
  display: flex;
  border-top: 2px solid #6096ca;
  border-bottom: 3px solid #6b9cca;
  border-radius: 12px 12px 0 0;
  background: #346dac;
`;
const MenuTab = styled.div`
  width: 241px;
  height: 15px;
  display: flex;
  justify-content: center;
  border-radius: 9px 9px 0 0;
  font: bold 11px/17px ${VERDANA};
  background: ${(p) => (p.$active ? "#eeeeee" : "transparent")};
  color: ${(p) => (p.$active ? "#0a57a4" : "#fff")};
`;
const Breadcrumb = styled.div`
  height: 16px;
  flex: none;
  display: flex;
  gap: 5px;
  padding-left: 4px;
  background: #dfe5ed;
  border-bottom: 1px solid #c0cdd4;
  font: 11px/17px ${VERDANA};
  color: #000;
`;
const PageBody = styled.div`
  flex: 1;
  min-height: 0;
  display: flex;
  background: linear-gradient(#d0dbe1 0, #d5dde5 12%, #dbe2ea 35%, #e7ebf3 75%, #f2f5f8 100%);
`;
const SideNav = styled.aside`
  width: 241px;
  flex: none;
  padding-top: 11px;
  font: 11px/25px ${CONDENSED};
`;
const SideTitle = styled.div`
  height: 37px;
  margin: 0 2px;
  display: flex;
  align-items: center;
  justify-content: center;
  border-top: 2px solid #eef1f4;
  border-bottom: 2px solid #eef1f4;
  border-radius: 10px;
  background: #346dac;
  color: #fff;
  font-weight: 700;
  line-height: 15px;
`;
const SideSearch = styled.div`
  width: 215px;
  height: 24px;
  margin: 10px 0 10px 13px;
  padding-left: 4px;
  border: 2px solid #5fa8d0;
  border-radius: 9px;
  background: #fff;
  color: #8b8b8b;
  line-height: 21px;
`;
const SideHeader = styled.div`
  height: 26px;
  display: flex;
  align-items: center;
  padding-left: 5px;
  gap: 6px;
  border: 1px solid #0457a2;
  border-top-color: #2b629f;
  background: linear-gradient(#1e5799, #7db9e8);
  color: #fff;
  font-weight: 700;
`;
const FoldBox = styled.div`
  width: 8px;
  height: 9px;
  margin: -6px 0 0 0;
  background: linear-gradient(#fff 0 3px, #222 3px 5px, #d9d9d9 5px);
  border: 1px solid #cfcfcf;
`;
const SideItem = styled.div`
  height: 25px;
  display: flex;
  align-items: center;
  padding-left: 11px;
  gap: 5px;
  border-bottom: 1px solid #f0f2f4;
  background: linear-gradient(90deg, #aecfe0, rgba(226, 231, 238, 0.35));
  color: #3d4043;
`;
const Main = styled.main`
  flex: 1;
  min-width: 0;
  display: flex;
  flex-direction: column;
  font: 10.800px/13px ${ARIAL};
  color: #000;
`;
const ActionRow = styled.div`
  height: 20px;
  flex: none;
  display: flex;
  justify-content: flex-end;
  align-items: flex-start;
  gap: 3px;
`;
const RefreshIcon = styled.div`
  padding-top: 2px;
`;
const PrefButton = styled.div`
  width: 71px;
  height: 19px;
  border: 3px double #9a9a9a;
  background: #ececec;
  color: #4c4c4c;
  font: 9.500px/14px ${CONDENSED};
  text-align: center;
`;
const Summary = styled.section`
  height: 162px;
  flex: none;
  display: grid;
  grid-template-columns: 534px 524px 530px 13px;
`;
const StatusInfo = styled.div`
  padding: 5px 0 0 8px;
`;
const StatusTitle = styled.h1`
  margin: 0;
  font-size: 12.800px;
  line-height: 14px;
`;
const Muted = styled.span`
  color: #757575;
`;
const ViewLinks = styled.div`
  margin-top: 33px;
  padding-left: 5px;
`;
const ViewLink = styled.div`
  display: flex;
  align-items: center;
  gap: 5px;
  color: #2b2f73;
`;
const Totals = styled.div`
  display: flex;
  flex-direction: column;
  align-items: center;
  padding-top: ${(p) => p.$top || 0}px;
`;
const BlockTitle = styled.h2`
  margin: 0 0 ${(p) => p.$gap || 0}px;
  font-size: 12.900px;
  line-height: 16px;
`;
const CountTable = styled.div`
  display: flex;
  gap: 2px;
  margin-bottom: 8px;
`;
const CountCol = styled.div`
  width: ${(p) => p.$w}px;
  text-align: center;
`;
const CountHead = styled.div`
  height: 16px;
  margin-bottom: 2px;
  background: #0055a2;
  color: #fff;
  font: bold 12.900px/17px ${ARIAL};
  font-style: ${(p) => (p.$italic ? "italic" : "normal")};
`;
const CountValue = styled.div`
  height: 13px;
  padding-left: 1px;
  background: ${(p) => p.$bg || "#e7e7e7"};
  color: ${(p) => (p.$bg ? "#fff" : "#000")};
`;
const SectionHead = styled.section`
  height: 59px;
  flex: none;
  display: grid;
  grid-template-columns: 1fr auto 1fr;
  padding: 4px 8px 0 6px;
`;
const SectionTitle = styled.div`
  display: flex;
  flex-direction: column;
  align-items: center;
  padding: 1px 0 0 7px;
`;
const SmallLine = styled.div`
  font-size: 9.330px;
  line-height: 11px;
  color: ${(p) => (p.$dim ? "#808080" : "#000")};
  i {
    font-style: normal;
    color: #000;
  }
`;
const ExportIcons = styled.div`
  justify-self: end;
  align-self: end;
  display: flex;
  align-items: center;
  gap: 6px;
  padding-bottom: 7px;
`;
const HostTable = styled.section`
  flex: none;
  margin-left: 9px;
  display: flex;
  flex-direction: column;
  gap: 2px;
`;
const HostRow = styled.div`
  display: grid;
  grid-template-columns: 461px 142px 203px 172px 602px;
  gap: 2px;
`;
const HeadCell = styled.div`
  height: 16px;
  padding-left: 5px;
  display: flex;
  align-items: center;
  gap: 5px;
  background: #0055a2;
  color: #fff;
  font: bold 12.900px/17px ${ARIAL};
  svg {
    margin-top: 3px;
  }
`;
const Cell = styled.div`
  height: 20px;
  display: flex;
  align-items: center;
  padding: 0 1px 2px;
  background: ${(p) => (p.$even ? "#e7e7e7" : "#ededed")};
  ${(p) => p.$center && "justify-content: center;"}
`;
const HostCell = styled(Cell)`
  padding: 0 1px 0 3px;
  color: ${(p) => (p.$unread ? "#1d2166" : "#757575")};
  gap: 2px;
`;
const HostName = styled.div`
  flex: 1;
  padding-bottom: 2px;
`;
const StateCell = styled(Cell)`
  background: #00cc33;
  color: #fff;
`;
const InfoCell = styled(Cell)`
  align-items: flex-start;
  justify-content: space-between;
  padding: 0 3px 0 1px;
`;
const PerfBar = styled.div`
  width: 76px;
  height: 20px;
  display: flex;
  border: 1px solid #8d8d8d;
  border-left: 0;
  border-radius: 3px;
  background: #c5c5c5;
`;
const PerfValue = styled.div`
  width: 6px;
  height: 19px;
  border-left: 1px solid #000;
  border-right: 1px solid #000;
  border-radius: 2px;
  background: linear-gradient(#1fc24a, #86e29b);
`;
const PerfWarn = styled.div`
  width: 1px;
  height: 13px;
  margin-left: 54px;
  background: #e6dc0a;
`;
const TableFoot = styled.div`
  display: flex;
  flex-direction: column;
  align-items: center;
  padding: 5px 0 0 6px;
`;
const MatchCount = styled.div`
  margin: 12px 0 0 1px;
  border-right: 1px solid #000;
`;
const Scrollbar = styled.div`
  width: 13px;
  flex: none;
  display: flex;
  flex-direction: column;
  border-left: 1px solid #bcbab6;
  background: #f2f1f0;
`;
const ScrollCap = styled.div`
  height: ${(p) => p.$h}px;
  flex: none;
  display: flex;
  align-items: center;
  justify-content: center;
`;
const ScrollThumb = styled.div`
  flex: 1;
  border: 1px solid #b3b1ad;
  border-left: 0;
  border-radius: 6px;
  background: linear-gradient(90deg, #e4e3e1, #d6d5d3);
`;
const Footer = styled.footer`
  height: 22px;
  flex: none;
  border-top: 2px solid #0455a0;
  background: linear-gradient(#f1f4f7, #d2dae1);
  display: flex;
  justify-content: center;
  font: 11px/17px ${VERDANA};
  color: #111;
  u {
    color: #3a2a8c;
  }
`;

const menu = [
  ["Project", 43],
  ["Disponibilities", 90],
  ["Capacities", 63],
  ["Production", 67],
  ["Reports", 48],
  ["Administration", 94],
  ["Help", 27],
];
const sideGroups = [
  { title: "Global Views", w: 72, items: [["dashboard", 51], ["tactical overview", 85], ["panorama", 50], ["performances", 68], ["problems", 46]] },
  { title: "Maps", w: 29, items: [["thruk", 26], ["nagvis", 32], ["network", 40]] },
  { title: "Events", w: 39, items: [["active events", 67], ["resolved events", 79], ["hosts view", 53], ["services view", 67], ["hostgroups view", 81], ["servicegroups view", 95], ["business view", 69], ["business impact", 80]] },
  { title: "Problems", w: 53, items: [["hosts failure", 62], ["services failure", 76], ["downtimes", 54], ["recurring downtimes", 102]] },
];
const hosts = [
  ["WINGU-PA4-ADMIN", "q", "16:41:58", "0d 22h 5m 16s", "0.22"],
  ["WINGU-PA4-BACKUP", "q", "16:42:08", "14d 2h 1m 45s", "1.21"],
  ["WINGU-PA4-ESXM1", "vm", "16:42:18", "7d 0h 47m 0s", "0.68"],
  ["WINGU-PA4-ESXM2", "vm", "16:42:28", "6d 0h 0m 53s", "0.10"],
  ["WINGU-PA4-ESXM3", "vm", "16:42:38", "5d 23h 49m 27s", "0.12"],
  ["WINGU-PA4-FACTU", "q", "16:42:58", "13d 0h 29m 39s", "0.11", true],
  ["WINGU-PA4-FI1", "q", "16:43:08", "5d 2h 18m 44s", "0.34"],
  ["WINGU-PA4-FW", "q", "16:43:18", "8d 1h 59m 56s", "0.12", true],
  ["WINGU-PA4-GRAPHS", "q", "16:43:28", "0d 22h 40m 8s", "0.18"],
  ["WINGU-PA4-LOGS", "q", "16:43:38", "14d 2h 1m 30s", "4.10", true],
  ["WINGU-PA4-MONITORING", "tux", "16:43:58", "0d 22h 5m 3s", "0.02"],
  ["WINGU-PA4-NA-B", "q", "16:44:08", "0d 22h 5m 2s", "2.10"],
  ["WINGU-PA4-NA1", "q", "16:44:18", "13d 0h 31m 50s", "1.15"],
  ["WINGU-PA4-PDU-104A", "q", "16:44:28", "0d 0h 9m 45s+", "6.80"],
  ["WINGU-PA4-PNS1", "q", "16:44:38", "0d 0h 9m 45s+", "0.14"],
  ["WINGU-PA4-PNS2", "q", "16:44:58", "0d 22h 11m 8s", "0.06"],
  ["WINGU-PA4-PXE", "q", "16:45:08", "0d 22h 3m 16s", "2.90"],
  ["WINGU-PA4-SW1", "sw", "16:39:48", "2d 6h 15m 12s", "0.79"],
  ["WINGU-PA4-SW2", "sw", "16:38:58", "2d 1h 32m 57s", "0.87"],
  ["WINGU-PA4-SWM1", "q", "16:45:38", "2d 1h 18m 3s", "0.86"],
];

const Gear = () => (
  <svg width="18" height="18" viewBox="0 0 18 18">
    <circle cx="9" cy="9" r="7.400" fill="none" stroke="#a2a2a2" strokeWidth="3" strokeDasharray="2.700 3.112" />
    <circle cx="9" cy="9" r="4.600" fill="none" stroke="#c0c0c0" strokeWidth="4.400" />
    <circle cx="9" cy="9" r="6.600" fill="none" stroke="#a9a9a9" strokeWidth=".6" />
    <circle cx="9" cy="9" r="2.300" fill="#ededed" stroke="#a0a0a0" strokeWidth=".8" />
  </svg>
);
const Notes = () => (
  <svg width="18" height="19" viewBox="0 0 18 19">
    <path d="M4 .6h9l4.400 4v11q0 1-1 1H4z" fill="#d6c8e4" stroke="#a388bc" />
    <path d="M1.600 2.500h9l4.200 4.300v10.400q0 1.200-1.200 1.200h-12Q.6 18.400.6 17V3.700q0-1.200 1-1.200z" fill="#e6deef" stroke="#a388bc" strokeWidth="1.100" />
    <path d="M3 15h9.500" stroke="#a48cbc" strokeWidth="2.400" />
  </svg>
);
const kinds = {
  q: (
    <svg width="20" height="20" viewBox="0 0 20 20">
      <path d="M8.500 6.500q.3-2.500 2.800-2.500t2.800 2.800q0 1.700-1.700 3-1.200.9-1.200 2.400" stroke="#b0b0b0" strokeWidth="3.600" fill="none" />
      <circle cx="11.600" cy="16" r="2.100" fill="#b0b0b0" />
      <path d="M6.300 7q.2-2.200 2.700-2.200t2.700 2.400q0 1.500-1.500 2.700-1 .8-1 2.200" stroke="#000" strokeWidth="3.400" fill="none" />
      <circle cx="9.300" cy="15.200" r="2" fill="#000" />
    </svg>
  ),
  vm: (
    <svg width="20" height="20" viewBox="0 0 20 20" fill="none">
      <rect x="1" y="6.500" width="13" height="12.500" rx="1.500" fill="#fff" fillOpacity=".6" stroke="#9dbfe0" strokeWidth="1.400" />
      <rect x="4" y="1" width="12" height="11.500" rx="1.500" fill="#fff" fillOpacity=".4" stroke="#9dbfe0" strokeWidth="1.300" />
      <rect x="7.500" y="4" width="11.500" height="11.500" rx="1.500" stroke="#8fb2da" strokeWidth="1.300" />
      <rect x="5.500" y="7" width="8" height="7" rx="1" stroke="#7396c0" strokeWidth="1.200" />
    </svg>
  ),
  tux: (
    <svg width="20" height="20" viewBox="0 0 20 20">
      <path d="M7 4q0-3.500 3-3.500T13 4q0 3 2.500 6.500t1 7H3.500q-1.500-3 1-7T7 4z" fill="#1d1d1d" />
      <path d="M8 7q2 1.500 4 0 2.500 5 2 9-4 2.500-8 0-.5-4 2-9z" fill="#fff" />
      <path d="m8 5 2-1 2 1-2 1.500zM1.500 17l3-3 4 5H3zM18.500 17l-3-3-4 5H17z" fill="#ecc55e" stroke="#a9812a" strokeWidth=".4" />
    </svg>
  ),
  sw: (
    <svg width="20" height="20" viewBox="0 0 20 20">
      <defs><radialGradient id="swg" cx=".5" cy=".5" r=".6"><stop offset="0" stopColor="#9fb5b4" /><stop offset="1" stopColor="#1f4547" /></radialGradient></defs>
      <rect width="20" height="20" rx="1.500" fill="#0d3033" /><path d="M1 1.500h18" stroke="#8aa3a4" />
      <path d="M2 10.500 5 6.500l3 4zM12 10.500l3-4 3 4z" fill="#9db2b2" />
      <rect x="1.500" y="11.500" width="17" height="7" fill="url(#swg)" />
    </svg>
  ),
};
const Sort = () => (
  <svg width="14" height="5" viewBox="0 0 14 5"><path d="M0 4.300 2.500 1.300 5 4.300zM8 1.300h5.200l-2.600 3z" fill="#fff" /></svg>
);
const Collapse = ({ up }) => (
  <svg width="13" height="13" viewBox="0 0 13 13">
    <rect x=".8" y=".8" width="11.400" height="11.400" fill="#f1f1f1" stroke="#3f4548" strokeWidth="1.500" />
    <path d="M2.500 3.500h8" stroke="#3f4548" strokeWidth="1.500" />
    <path d={up ? "M4 8.500 6.500 5.500 9 8.500z" : "M4 6.500h5l-2.500 3z"} fill="#3f4548" /><path d="M2.500 6h1M9.500 6h1M2.500 8h1M9.500 8h1M2.500 10h8" stroke="#3f4548" strokeDasharray="1 1" />
  </svg>
);
const Caret = () => (
  <svg width="4" height="8"><path d="M0 0 4 4 0 8z" fill="#6f7275" /></svg>
);

function Counts({ cols, italic }) {
  return (
    <CountTable>
      {cols.map(([h, v, w, bg]) => (
        <CountCol key={h} $w={w}>
          <CountHead $italic={italic}>{h}</CountHead>
          <CountValue $bg={bg}>{v}</CountValue>
        </CountCol>
      ))}
    </CountTable>
  );
}
const SelectLinks = () => (
  <SmallLine $dim>
    <Fit w={233}>select all <i>-</i> unselect all <i>-</i> all problems <i>-</i> all with downtime</Fit>
  </SmallLine>
);

function Sidebar() {
  return (
    <SideNav>
      <SideTitle><Fit w={78}>Disponibilities</Fit></SideTitle>
      <SideSearch><Fit w={45}>Search ...</Fit></SideSearch>
      {sideGroups.map((g) => (
        <React.Fragment key={g.title}>
          <SideHeader>
            <FoldBox />
            <Fit w={g.w}>{g.title}</Fit>
          </SideHeader>
          {g.items.map(([t, w]) => (
            <SideItem key={t}>
              <Caret />
              <Fit w={w}>{t}</Fit>
            </SideItem>
          ))}
        </React.Fragment>
      ))}
    </SideNav>
  );
}

function Hosts() {
  return (
    <HostTable>
      <HostRow>
        {["Host", "Status", "Last Check", "Duration", "Status Information"].map((h) => (
          <HeadCell key={h}>{h}<Sort /></HeadCell>
        ))}
      </HostRow>
      {hosts.map(([name, kind, last, dur, rta, unread], i) => {
        const even = i % 2 === 1;
        return (
          <HostRow key={name}>
            <HostCell $even={even} $unread={unread}>
              <HostName>{name}</HostName>
              <Gear />
              {kinds[kind]}
              <Notes />
            </HostCell>
            <StateCell>UP</StateCell>
            <Cell $even={even} $center>{last}</Cell>
            <Cell $even={even}>{dur}</Cell>
            <InfoCell $even={even}>
              <Fit w={211}>{`PING OK - Packet loss = 0%, RTA = ${rta} ms`}</Fit>
              <PerfBar><PerfValue /><PerfWarn /></PerfBar>
            </InfoCell>
          </HostRow>
        );
      })}
    </HostTable>
  );
}

function ExportRow() {
  return (
    <ExportIcons>
      <svg width="16" height="17" viewBox="0 0 16 17"><path d="M1 1h12v14H1z" fill="#5b8fc4" stroke="#2f5f95" /><path d="M4 1v14" stroke="#2f5f95" /><path d="M6 4h5v2H6z" fill="#cfe1f3" /><circle cx="12" cy="13" r="3.500" fill="#6cab3a" stroke="#3f7a18" /><path d="M12 11v4M10 13h4" stroke="#fff" strokeWidth="1.300" /></svg>
      <svg width="15" height="9" viewBox="0 0 15 9"><rect x="1" y="1.500" width="6.500" height="5.500" rx="2.700" fill="none" stroke="#6c6c6c" strokeWidth="1.700" /><rect x="7.500" y="1.500" width="6.500" height="5.500" rx="2.700" fill="none" stroke="#6c6c6c" strokeWidth="1.700" /><path d="M5 4.300h5" stroke="#444" strokeWidth="1.500" /></svg>
      <svg width="15" height="15" viewBox="0 0 15 15"><circle cx="8" cy="7.500" r="5" fill="none" stroke="#3c3c3c" strokeWidth="4" /><path d="M3.500 5q2-3 6-2.500M13 9q-2 3.500-5 3" stroke="#a5a5a5" strokeWidth="1.500" fill="none" /></svg>
      <svg width="16" height="16" viewBox="0 0 16 16"><path d="M4 .5h8l3.500 3.500v11.500H4z" fill="#fff" stroke="#a9b3bb" /><path d="M.5 3.500h9v9h-9z" fill="#e6f2dc" stroke="#4d8f2a" /><path d="m2 6 3 4.500M5 6l-3 4.500M6 6v4.500h2" stroke="#2f7a1a" strokeWidth="1.500" fill="none" /></svg>
    </ExportIcons>
  );
}

function Page() {
  return (
    <>
      <PageHeader>
        <Logo>
          <LogoBig><Fit w={27}>E</Fit></LogoBig>
          <LogoSmall><Fit w={35}>yes</Fit></LogoSmall>
          <LogoBig><Fit w={33}>O</Fit></LogoBig>
          <LogoSmall><Fit w={7}>f</Fit></LogoSmall>
          <LogoBig><Fit w={33}>N</Fit></LogoBig>
          <LogoSmall><Fit w={70}>etwork</Fit></LogoSmall>
        </Logo>
        <UserInfo>
          <div><Fit w={133}>User : <u>admin</u> - <u>logout</u></Fit></div>
          <div><Fit w={168}>March 16, 2016 4:47:49 pm</Fit></div>
        </UserInfo>
      </PageHeader>
      <MenuWrap>
        <MenuBar>
          {menu.map(([t, w]) => (
            <MenuTab key={t} $active={t === "Disponibilities"}><Fit w={w}>{t}</Fit></MenuTab>
          ))}
        </MenuBar>
      </MenuWrap>
      <Breadcrumb>
        <b><Fit w={109}>{"Disponibilities ->"}</Fit></b>
        <b><em><Fit w={41}>Events</Fit></em></b>
        <Fit w={18}>{"-->"}</Fit>
        <em><Fit w={60}>hosts view</Fit></em>
      </Breadcrumb>
      <PageBody>
        <Sidebar />
        <Main>
          <ActionRow>
            <RefreshIcon>
              <svg width="17" height="17" viewBox="0 0 17 17"><path d="M1 8q1-6 8-5l-1-2 6 3-4 5v-3Q5 5 4 8z" fill="#6cb86a" stroke="#3d8a3c" strokeWidth=".8" /><path d="M16 9q-1 6-8 5l1 2-6-3 4-5v3q5 1 6-2z" fill="#6cb86a" stroke="#3d8a3c" strokeWidth=".8" /></svg>
            </RefreshIcon>
            <PrefButton><Fit w={47}>preferences</Fit></PrefButton>
          </ActionRow>
          <Summary>
            <StatusInfo>
              <StatusTitle><Fit w={145}>Current Network Status</Fit></StatusTitle>
              <div><Fit w={226}>Last Updated: Wed Mar 16 16:47:34 CET 2016</Fit></div>
              <div><Fit w={127}>Updated every 90 seconds</Fit></div>
              <div><Fit w={72}>{"Thruk 1.88-4 - "}</Fit><Muted><Fit w={69}>www.thruk.org</Fit></Muted></div>
              <div><Fit w={93}>Logged in as <em>admin</em></Fit></div>
              <ViewLinks>
                <ViewLink><Caret /><Fit w={221}>View Service Status Detail For All Host Groups</Fit></ViewLink>
                <ViewLink><Caret /><Fit w={200}>View Status Overview For All Host Groups</Fit></ViewLink>
                <ViewLink><Caret /><Fit w={202}>View Status Summary For All Host Groups</Fit></ViewLink>
                <ViewLink><Caret /><Fit w={176}>View Status Grid For All Host Groups</Fit></ViewLink>
              </ViewLinks>
            </StatusInfo>
            <Totals $top={2}>
              <BlockTitle $gap={3}><Fit w={114}>Host Status Totals</Fit></BlockTitle>
              <Counts cols={[["Up", 20, 28, "#00cc33"], ["Down", 0, 46], ["Unreachable", 0, 88], ["Pending", 0, 62]]} />
              <Counts italic cols={[["All Problems", 0, 92], ["All Types", 20, 69]]} />
            </Totals>
            <Totals $top={2}>
              <BlockTitle $gap={3}><Fit w={131}>Service Status Totals</Fit></BlockTitle>
              <Counts cols={[["OK", 166, 30, "#00cc33"], ["Warning", 0, 63], ["Unknown", 0, 69], ["Critical", 1, 55, "#ff3300"], ["Pending", 0, 62]]} />
              <Counts italic cols={[["All Problems", 1, 92, "#6dc1fe"], ["All Types", 167, 69]]} />
            </Totals>
            <Collapse up />
          </Summary>
          <SectionHead>
            <Collapse />
            <SectionTitle>
              <BlockTitle $gap={13}><Fit w={249}>Host Status Details For All Host Groups</Fit></BlockTitle>
              <SmallLine><Fit w={368}>select host with leftclick to send multiple commands. Select multiple with shift + mouse.</Fit></SmallLine>
              <SelectLinks />
            </SectionTitle>
            <ExportRow />
          </SectionHead>
          <Hosts />
          <TableFoot>
            <SelectLinks />
            <MatchCount><Fit w={196}>20 of 20 Matching Host Entries Displayed</Fit></MatchCount>
          </TableFoot>
        </Main>
        <Scrollbar>
          <ScrollCap $h={13}><svg width="6" height="4"><path d="M0 4h6L3 0z" fill="#9b9995" /></svg></ScrollCap>
          <ScrollThumb />
          <ScrollCap $h={14}><svg width="6" height="4"><path d="M0 0h6L3 4z" fill="#9b9995" /></svg></ScrollCap>
        </Scrollbar>
      </PageBody>
      <Footer><Fit w={321}><u>EyesOfNetwork</u> product under GPL2 sponsorized by APX</Fit></Footer>
    </>
  );
}

export default function App() {
  return (
    <Desktop>
      <Global />
      <TopPanel>
        <WindowTitle><Fit w={226}>All Hostgroups - Mozilla Firefox</Fit></WindowTitle>
        <Tray>
          <TrayItem $w={32}>
            <svg width="22" height="20" viewBox="0 0 22 20"><path d="M11 .8q9.500.5 9.500 9 0 3-2 5.500l2 4-5-1.500q-2 1-4.500 1-9.500-.5-9.500-9T11 .8z" fill="#f26b30" stroke="#e9e4dc" strokeWidth="1.500" /><path d="M5.500 11q5.500 4.500 11 0-1.500 4-5.500 4t-5.500-4z" fill="#fff" /></svg>
          </TrayItem>
          <TrayItem $w={32}>
            <svg width="18" height="17" viewBox="0 0 18 17"><path d="M5 0 0 5h3.500v7h3V5H10zM13 17l5-5h-3.500V4h-3v8H8z" fill="#dfdbd2" /></svg>
          </TrayItem>
          <TrayItem $w={32}><KeyboardBadge>Fr<sub>1</sub></KeyboardBadge></TrayItem>
          <TrayItem $w={32}>
            <svg width="18" height="13" viewBox="0 0 18 13"><path d="M0 0h18v13H0z" fill="#19b6ee" /><path d="m0 0 9 8 9-8M0 13l6.500-7M18 13l-6.500-7" stroke="#2b4a55" strokeWidth="1.300" fill="none" /></svg>
          </TrayItem>
          <TrayItem $w={33}>
            <svg width="20" height="16" viewBox="0 0 20 16"><path d="M0 5h4l5-4v14l-5-4H0z" fill="#dfdbd2" /><path d="M11 5q2 3 0 6" stroke="#dfdbd2" strokeWidth="1.400" fill="none" /><path d="M13.500 3q3.500 5 0 10M16 1q5 7 0 14" stroke="#8b8880" strokeWidth="1.400" fill="none" /></svg>
          </TrayItem>
          <TrayItem $w={48}><Fit w={35}>16:47</Fit></TrayItem>
          <TrayItem $w={26}>
            <svg width="17" height="17" viewBox="0 0 17 17"><circle cx="8.500" cy="8.500" r="5" fill="none" stroke="#dfdbd2" strokeWidth="2.200" /><circle cx="8.500" cy="8.500" r="7" fill="none" stroke="#dfdbd2" strokeWidth="2.200" strokeDasharray="2.200 3.300" /><path d="M6 0h5v7H6z" fill="#4e4c44" /><path d="M8.500 0v7.500" stroke="#dfdbd2" strokeWidth="2" /></svg>
          </TrayItem>
        </Tray>
      </TopPanel>
      <Workspace>
        <Launcher />
        <Browser>
          <BrowserChrome />
          <Page />
        </Browser>
      </Workspace>
    </Desktop>
  );
}
